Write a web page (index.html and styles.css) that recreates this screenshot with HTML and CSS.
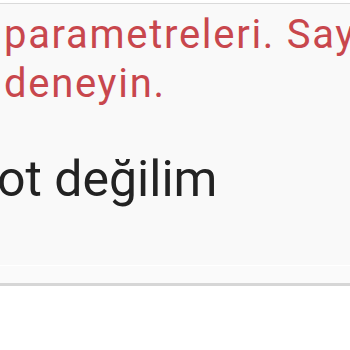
FILE: index.html
```html
<!DOCTYPE html>
<html lang="tr">
  <head>
    <meta charset="utf-8" />
    <title>reCAPTCHA</title>
    <link rel="stylesheet" href="styles.css">
  </head>
  <body>
    <div class="anchor">
      <div class="error-msg">
        <div class="error-line">parametreleri. Sayfayı yeniden yükleyip tekrar</div>
        <div class="error-line">deneyin.</div>
      </div>
      <div class="checkbox-label">ot değilim</div>
      <div class="anchor-foot"></div>
    </div>
  </body>
</html>
```

FILE: styles.css
```css
body {
  margin: 0;
  background: #fff;
  font-family: Roboto, "Liberation Sans", sans-serif;
  overflow: hidden;
}
.anchor {
  margin-top: 3px;
  border-top: 1px solid #dadada;
  border-bottom: 3px solid #d6d6d6;
  background: #f9f9f9;
  box-shadow: 0 3px 6px rgba(0, 0, 0, 0.06);
}
.error-msg {
  padding: 6px 0 0 4px;
  color: #c8474d;
  font-size: 40px;
  line-height: 49px;
  letter-spacing: 1.7px;
}
.error-line {
  white-space: nowrap;
  overflow: hidden;
}
.checkbox-label {
  margin: 41px 0 0 -3px;
  color: #222;
  font-size: 50px;
  line-height: 60px;
  height: 116px;
}
.anchor-foot {
  height: 17px;
  border-top: 1px solid #fff;
  background: #fafafa;
}
```
